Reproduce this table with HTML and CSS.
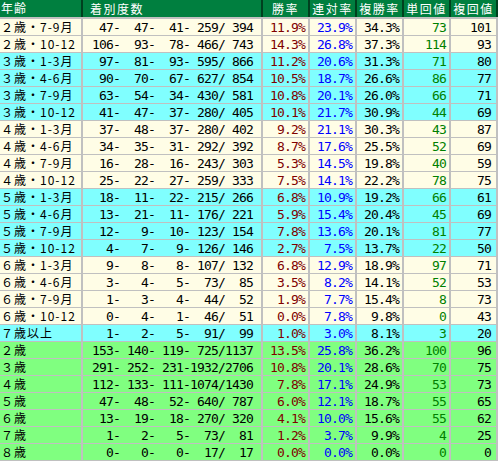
FILE: index.html
```html
<!DOCTYPE html>
<html lang="ja">
<head>
<meta charset="utf-8">
<title>年齢別成績</title>
<link rel="stylesheet" href="styles.css">
</head>
<body>
<div class="table">
  <div class="row head">
    <div class="c age">年齢</div>
    <div class="c cnt">着別度数</div>
    <div class="c">勝率</div>
    <div class="c">連対率</div>
    <div class="c">複勝率</div>
    <div class="c">単回値</div>
    <div class="c">複回値</div>
  </div>

  <div class="row cream"><div class="c age">２歳・7-9月</div><div class="c cnt"> 47-  47-  41- 259/ 394</div><div class="c win">11.9%</div><div class="c ren">23.9%</div><div class="c fuku">34.3%</div><div class="c tan">73</div><div class="c fk">101</div></div>
  <div class="row cream"><div class="c age">２歳・10-12</div><div class="c cnt">106-  93-  78- 466/ 743</div><div class="c win">14.3%</div><div class="c ren">26.8%</div><div class="c fuku">37.3%</div><div class="c tan">114</div><div class="c fk">93</div></div>

  <div class="row cyan"><div class="c age">３歳・1-3月</div><div class="c cnt"> 97-  81-  93- 595/ 866</div><div class="c win">11.2%</div><div class="c ren">20.6%</div><div class="c fuku">31.3%</div><div class="c tan">71</div><div class="c fk">80</div></div>
  <div class="row cyan"><div class="c age">３歳・4-6月</div><div class="c cnt"> 90-  70-  67- 627/ 854</div><div class="c win">10.5%</div><div class="c ren">18.7%</div><div class="c fuku">26.6%</div><div class="c tan">86</div><div class="c fk">77</div></div>
  <div class="row cyan"><div class="c age">３歳・7-9月</div><div class="c cnt"> 63-  54-  34- 430/ 581</div><div class="c win">10.8%</div><div class="c ren">20.1%</div><div class="c fuku">26.0%</div><div class="c tan">66</div><div class="c fk">71</div></div>
  <div class="row cyan"><div class="c age">３歳・10-12</div><div class="c cnt"> 41-  47-  37- 280/ 405</div><div class="c win">10.1%</div><div class="c ren">21.7%</div><div class="c fuku">30.9%</div><div class="c tan">44</div><div class="c fk">69</div></div>

  <div class="row cream"><div class="c age">４歳・1-3月</div><div class="c cnt"> 37-  48-  37- 280/ 402</div><div class="c win">9.2%</div><div class="c ren">21.1%</div><div class="c fuku">30.3%</div><div class="c tan">43</div><div class="c fk">87</div></div>
  <div class="row cream"><div class="c age">４歳・4-6月</div><div class="c cnt"> 34-  35-  31- 292/ 392</div><div class="c win">8.7%</div><div class="c ren">17.6%</div><div class="c fuku">25.5%</div><div class="c tan">52</div><div class="c fk">69</div></div>
  <div class="row cream"><div class="c age">４歳・7-9月</div><div class="c cnt"> 16-  28-  16- 243/ 303</div><div class="c win">5.3%</div><div class="c ren">14.5%</div><div class="c fuku">19.8%</div><div class="c tan">40</div><div class="c fk">59</div></div>
  <div class="row cream"><div class="c age">４歳・10-12</div><div class="c cnt"> 25-  22-  27- 259/ 333</div><div class="c win">7.5%</div><div class="c ren">14.1%</div><div class="c fuku">22.2%</div><div class="c tan">78</div><div class="c fk">75</div></div>

  <div class="row cyan"><div class="c age">５歳・1-3月</div><div class="c cnt"> 18-  11-  22- 215/ 266</div><div class="c win">6.8%</div><div class="c ren">10.9%</div><div class="c fuku">19.2%</div><div class="c tan">66</div><div class="c fk">61</div></div>
  <div class="row cyan"><div class="c age">５歳・4-6月</div><div class="c cnt"> 13-  21-  11- 176/ 221</div><div class="c win">5.9%</div><div class="c ren">15.4%</div><div class="c fuku">20.4%</div><div class="c tan">45</div><div class="c fk">69</div></div>
  <div class="row cyan"><div class="c age">５歳・7-9月</div><div class="c cnt"> 12-   9-  10- 123/ 154</div><div class="c win">7.8%</div><div class="c ren">13.6%</div><div class="c fuku">20.1%</div><div class="c tan">81</div><div class="c fk">77</div></div>
  <div class="row cyan"><div class="c age">５歳・10-12</div><div class="c cnt">  4-   7-   9- 126/ 146</div><div class="c win">2.7%</div><div class="c ren">7.5%</div><div class="c fuku">13.7%</div><div class="c tan">22</div><div class="c fk">50</div></div>

  <div class="row cream"><div class="c age">６歳・1-3月</div><div class="c cnt">  9-   8-   8- 107/ 132</div><div class="c win">6.8%</div><div class="c ren">12.9%</div><div class="c fuku">18.9%</div><div class="c tan">97</div><div class="c fk">71</div></div>
  <div class="row cream"><div class="c age">６歳・4-6月</div><div class="c cnt">  3-   4-   5-  73/  85</div><div class="c win">3.5%</div><div class="c ren">8.2%</div><div class="c fuku">14.1%</div><div class="c tan">52</div><div class="c fk">53</div></div>
  <div class="row cream"><div class="c age">６歳・7-9月</div><div class="c cnt">  1-   3-   4-  44/  52</div><div class="c win">1.9%</div><div class="c ren">7.7%</div><div class="c fuku">15.4%</div><div class="c tan">8</div><div class="c fk">73</div></div>
  <div class="row cream"><div class="c age">６歳・10-12</div><div class="c cnt">  0-   4-   1-  46/  51</div><div class="c win">0.0%</div><div class="c ren">7.8%</div><div class="c fuku">9.8%</div><div class="c tan">0</div><div class="c fk">43</div></div>

  <div class="row cyan"><div class="c age">７歳以上</div><div class="c cnt">  1-   2-   5-  91/  99</div><div class="c win">1.0%</div><div class="c ren">3.0%</div><div class="c fuku">8.1%</div><div class="c tan">3</div><div class="c fk">20</div></div>

  <div class="row green"><div class="c age">２歳</div><div class="c cnt">153- 140- 119- 725/1137</div><div class="c win">13.5%</div><div class="c ren">25.8%</div><div class="c fuku">36.2%</div><div class="c tan">100</div><div class="c fk">96</div></div>
  <div class="row green"><div class="c age">３歳</div><div class="c cnt">291- 252- 231-1932/2706</div><div class="c win">10.8%</div><div class="c ren">20.1%</div><div class="c fuku">28.6%</div><div class="c tan">70</div><div class="c fk">75</div></div>
  <div class="row green"><div class="c age">４歳</div><div class="c cnt">112- 133- 111-1074/1430</div><div class="c win">7.8%</div><div class="c ren">17.1%</div><div class="c fuku">24.9%</div><div class="c tan">53</div><div class="c fk">73</div></div>
  <div class="row green"><div class="c age">５歳</div><div class="c cnt"> 47-  48-  52- 640/ 787</div><div class="c win">6.0%</div><div class="c ren">12.1%</div><div class="c fuku">18.7%</div><div class="c tan">55</div><div class="c fk">65</div></div>
  <div class="row green"><div class="c age">６歳</div><div class="c cnt"> 13-  19-  18- 270/ 320</div><div class="c win">4.1%</div><div class="c ren">10.0%</div><div class="c fuku">15.6%</div><div class="c tan">55</div><div class="c fk">62</div></div>
  <div class="row green"><div class="c age">７歳</div><div class="c cnt">  1-   2-   5-  73/  81</div><div class="c win">1.2%</div><div class="c ren">3.7%</div><div class="c fuku">9.9%</div><div class="c tan">4</div><div class="c fk">25</div></div>
  <div class="row green"><div class="c age">８歳</div><div class="c cnt">  0-   0-   0-  17/  17</div><div class="c win">0.0%</div><div class="c ren">0.0%</div><div class="c fuku">0.0%</div><div class="c tan">0</div><div class="c fk">0</div></div>
</div>
</body>
</html>
```

FILE: styles.css
```css
html, body {
  margin: 0;
  padding: 0;
  background: #ffffff;
}

.table {
  width: 498px;
  display: flex;
  flex-direction: column;
  row-gap: 2px;
  padding-bottom: 2px;
  background: #c0c0c0;
}

.row {
  display: grid;
  grid-template-columns: 81px 178px repeat(5, 45px);
  column-gap: 2px;
  padding-right: 2px;
  height: 15px;
  background: #c0c0c0;
}

.c {
  box-sizing: border-box;
  white-space: pre;
  text-align: right;
  padding-top: 2px;
  padding-right: 3px;
  font-family: "DejaVu Sans Mono", "Noto Sans CJK JP", monospace;
  font-size: 13px;
  letter-spacing: -0.83px;
  line-height: 13px;
  color: #000000;
}

.cream .c { background: #fffde6; }
.cyan .c { background: #80ffff; }
.green .c { background: #80ff80; }

.head {
  height: 17px;
  background: #00401f;
}

.head .c {
  background: #007f3f;
  color: #ffffff;
  font-family: "Noto Sans CJK JP", sans-serif;
  font-size: 12px;
  letter-spacing: 1.5px;
  padding-top: 0;
  line-height: 17px;
  text-align: center;
  padding-right: 0;
}

.head .c.age {
  text-align: left;
  padding-left: 1px;
}

.head .c.cnt {
  text-align: left;
  padding-left: 7px;
}

.c.age {
  text-align: left;
  padding-top: 0;
  padding-left: 1px;
  padding-right: 0;
  font-family: "Noto Sans CJK JP", sans-serif;
  font-size: 12px;
  letter-spacing: 1px;
  line-height: 16px;
}

.c.cnt { padding-right: 8px; }
.c.win { color: #800000; }
.c.ren { color: #0000ff; }
.c.tan { color: #008000; }
.c.fk { padding-right: 5px; }
```
